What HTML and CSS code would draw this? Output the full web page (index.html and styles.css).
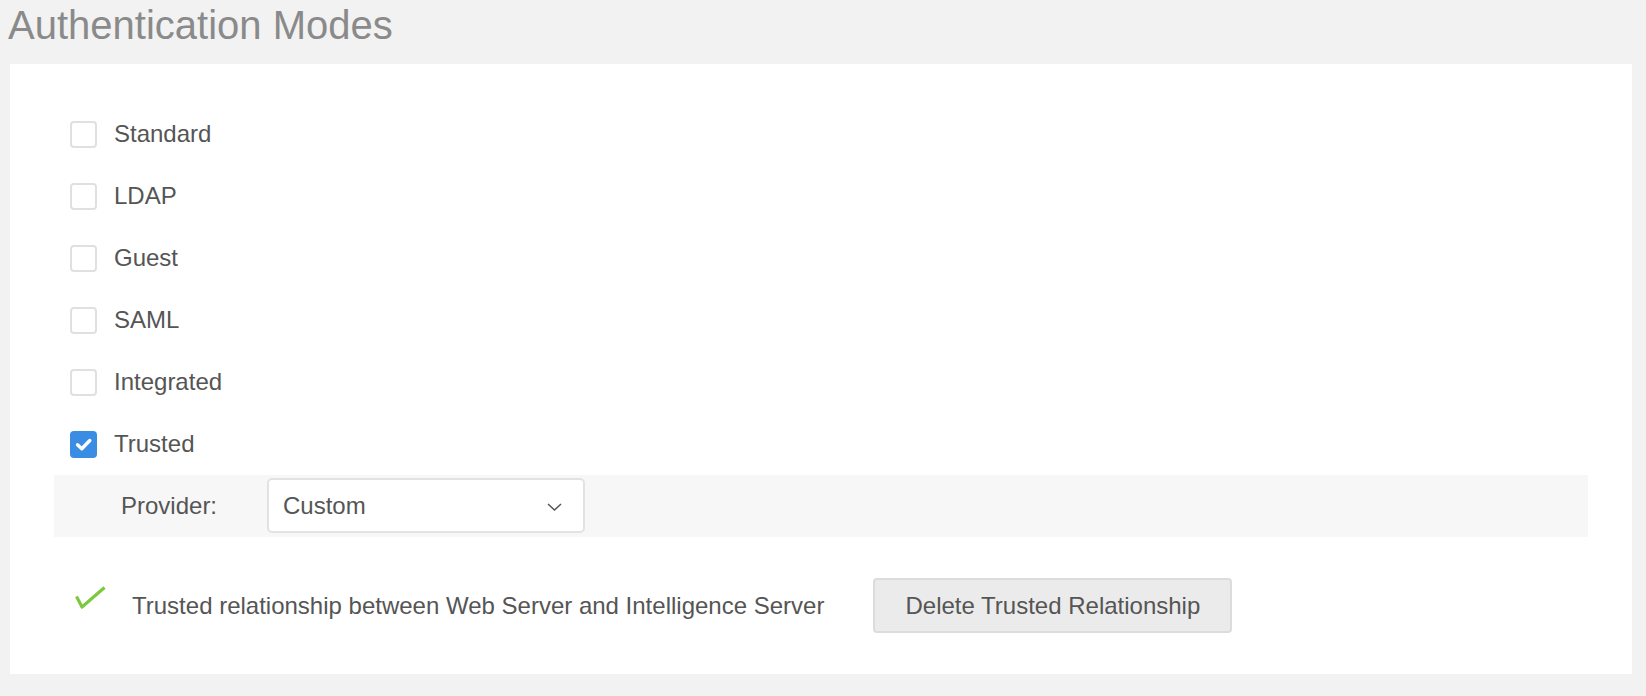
FILE: index.html
```html
<!DOCTYPE html>
<html>
<head>
<meta charset="utf-8">
<link rel="stylesheet" href="styles.css">
</head>
<body>
<h1 class="title">Authentication Modes</h1>
<div class="panel">
  <ul class="modes">
    <li class="mode"><span class="box"></span><span class="label">Standard</span></li>
    <li class="mode"><span class="box"></span><span class="label">LDAP</span></li>
    <li class="mode"><span class="box"></span><span class="label">Guest</span></li>
    <li class="mode"><span class="box"></span><span class="label">SAML</span></li>
    <li class="mode"><span class="box"></span><span class="label">Integrated</span></li>
    <li class="mode"><span class="box checked"><svg width="27" height="27" viewBox="0 0 27 27"><path d="M7.5 13.8 L11.8 17.8 L19.8 9.5" fill="none" stroke="#fff" stroke-width="3.4" stroke-linecap="round" stroke-linejoin="round"/></svg></span><span class="label">Trusted</span></li>
  </ul>
  <div class="provider">
    <span class="provider-label">Provider:</span>
    <div class="select">
      <span class="select-value">Custom</span>
      <svg class="chev" width="15" height="8" viewBox="0 0 15 8"><path d="M1 1 L7.5 7 L14 1" fill="none" stroke="#555" stroke-width="1.5"/></svg>
    </div>
  </div>
  <div class="status">
    <svg class="ok" width="31" height="25" viewBox="0 0 31 25"><path d="M1.5 10.5 L7 21 L29.5 1.5" fill="none" stroke="#7dc840" stroke-width="3.2" stroke-linejoin="round"/></svg>
    <span class="status-text">Trusted relationship between Web Server and Intelligence Server</span>
    <button class="btn">Delete Trusted Relationship</button>
  </div>
</div>
</body>
</html>
```
FILE: styles.css
```css
html, body {
  margin: 0;
  padding: 0;
  background: #f2f2f2;
  font-family: "Liberation Sans", Arial, Helvetica, sans-serif;
  color: #555;
}
.title {
  margin: 5px 0 0 8px;
  font-size: 40px;
  line-height: 40px;
  font-weight: normal;
  color: #8a8a8a;
  height: 40px;
}
.panel {
  margin: 19px 14px 22px 10px;
  background: #fff;
  padding: 39px 44px 41px 44px;
}
.modes {
  list-style: none;
  margin: 0;
  padding: 0 0 0 16px;
}
.mode {
  display: flex;
  align-items: center;
  height: 62px;
}
.box {
  box-sizing: border-box;
  width: 27px;
  height: 27px;
  border: 2px solid #e0e0e0;
  border-radius: 4px;
  background: #fff;
  margin-right: 17px;
  flex: none;
  position: relative;
}
.box.checked {
  background: #3b8de3;
  border: none;
}
.box.checked svg {
  display: block;
}
.label {
  font-size: 24px;
  color: #555;
}
.provider {
  display: flex;
  align-items: center;
  background: #f7f7f7;
  padding: 3px 0 4px 67px;
  height: 55px;
}
.provider-label {
  width: 146px;
  font-size: 24px;
  color: #555;
}
.select {
  box-sizing: border-box;
  width: 318px;
  height: 55px;
  border: 2px solid #e2e2e2;
  border-radius: 5px;
  background: #fff;
  display: flex;
  align-items: center;
  justify-content: space-between;
  padding: 0 21px 0 14px;
}
.select-value {
  font-size: 24px;
  color: #555;
}
.chev {
  display: block;
  margin-top: 2px;
}
.status {
  display: flex;
  align-items: center;
  margin-top: 41px;
  padding-left: 21px;
  height: 55px;
}
.ok {
  display: block;
  margin-bottom: 14px;
  margin-right: 26px;
  flex: none;
}
.status-text {
  font-size: 24px;
  color: #555;
}
.btn {
  box-sizing: border-box;
  margin-left: 49px;
  height: 55px;
  width: 359px;
  background: #ebebeb;
  border: 2px solid #dcdcdc;
  border-radius: 4px;
  font-family: "Liberation Sans", Arial, Helvetica, sans-serif;
  font-size: 24px;
  color: #555;
  padding: 0;
}
```
